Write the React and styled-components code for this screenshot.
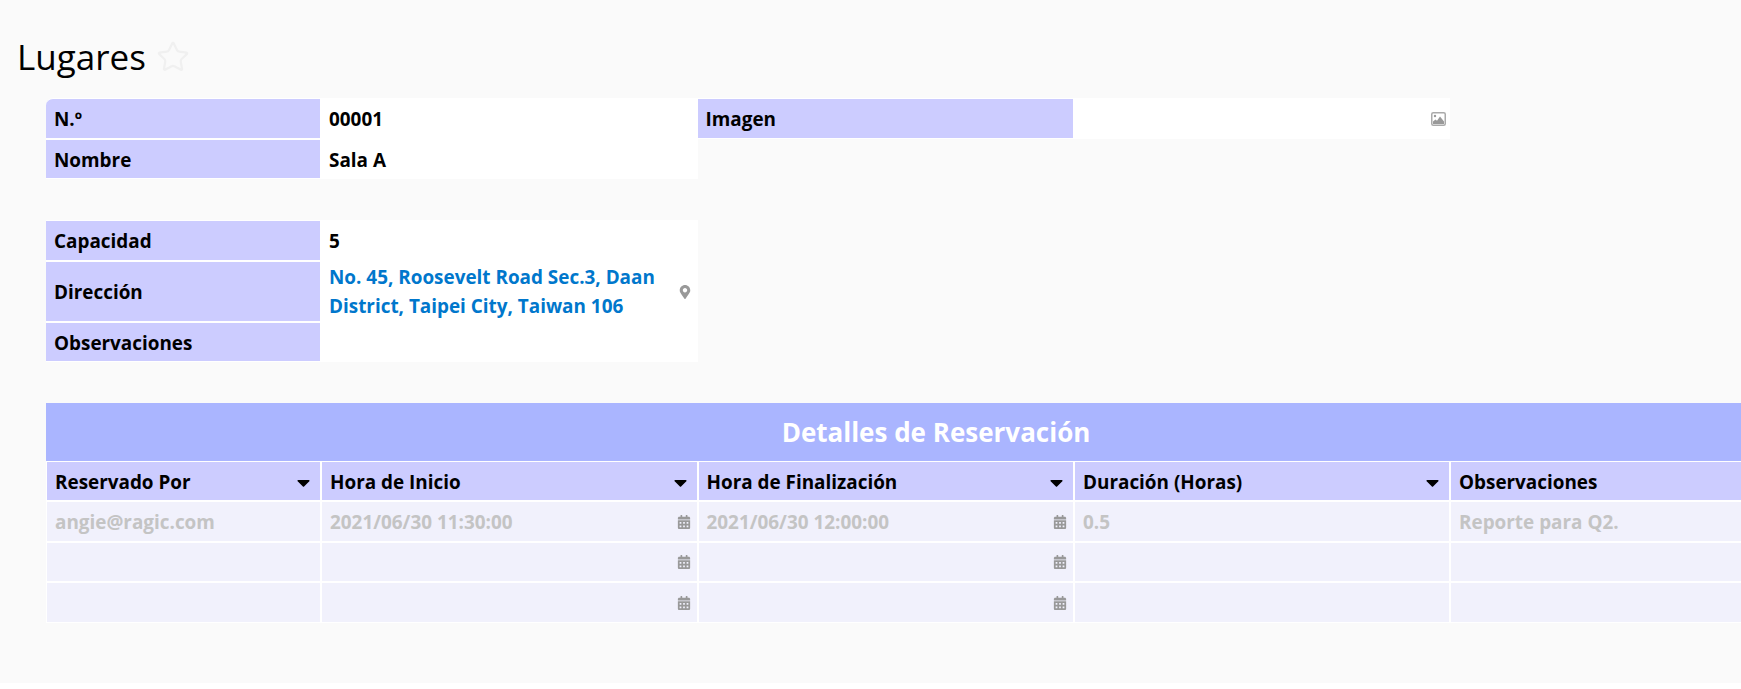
import React from 'react'
import styled, { createGlobalStyle } from 'styled-components'
import { FaCalendarAlt, FaCaretDown, FaMapMarkerAlt } from 'react-icons/fa'
import { Star } from 'lucide-react'

const GlobalStyle = createGlobalStyle`
  html, body {
    margin: 0;
    background: #fff;
    overflow: hidden;
  }
  body {
    font-family: "Open Sans", "Liberation Sans", sans-serif;
  }
`

const Page = styled.div`
  height: 683px;
  background: #fafafa;
  overflow: hidden;
`

const TitleBar = styled.div`
  display: flex;
  align-items: center;
  gap: 10px;
  height: 46px;
  padding: 34px 0 0 17px;
`

const Title = styled.h1`
  margin: -1px 0 0;
  font-size: 35px;
  font-weight: 400;
  line-height: 46px;
  color: #000;
`

const FavStar = styled(Star)`
  width: 34px;
  height: 34px;
  color: #f0f0f0;
  stroke-width: 1.6;
`

const Form = styled.div`
  padding: 18px 0 0 46px;
`

const FieldRow = styled.div`
  display: flex;
  align-items: flex-start;
  margin-bottom: 41px;
`

const FieldGrid = styled.div`
  display: grid;
  grid-template-columns: ${p => p.$labelWidth}px ${p => p.$valueWidth}px;
`

const Label = styled.div`
  display: flex;
  align-items: center;
  box-sizing: border-box;
  height: ${p => p.$height || 40.5}px;
  padding: 2px 0 0 8px;
  background: #ccccff;
  border: solid #fff;
  border-width: 1px 1px 1px 0;
  border-top-left-radius: ${p => (p.$rounded ? 7 : 0)}px;
  font-size: 18.9px;
  font-weight: 700;
  color: #000;
`

const Value = styled.div`
  display: flex;
  align-items: center;
  justify-content: space-between;
  box-sizing: border-box;
  height: ${p => p.$height || 40.5}px;
  padding: 1.5px ${p => p.$right || 6}px 0 8px;
  background: #fff;
  font-size: 18.9px;
  font-weight: 700;
  color: #000;
`

const Address = styled.span`
  width: 330px;
  line-height: 29px;
  color: #0077cc;
`

const GrayIcon = styled.span`
  display: inline-flex;
  flex: none;
  margin-left: auto;
  font-size: ${p => p.$size || 14}px;
  color: #999;
`

const Sheet = styled.div`
  width: 1780px;
`

const Band = styled.div`
  display: flex;
  align-items: center;
  justify-content: center;
  height: 58px;
  background: #aab5ff;
  font-size: 26px;
  font-weight: 700;
  color: #fff;
`

const Columns = styled.div`
  display: grid;
  grid-template-columns: 275px 376.5px 376.5px 376px 376px;
`

const HeadCell = styled.div`
  display: flex;
  align-items: center;
  justify-content: space-between;
  box-sizing: border-box;
  height: 40px;
  padding: 2px 6px 0 8px;
  background: #ccccff;
  border: 1px solid #fff;
  font-size: 18.9px;
  font-weight: 700;
  color: #000;
`

const Caret = styled(FaCaretDown)`
  font-size: 21px;
  color: #000;
`

const DataCell = styled.div`
  display: flex;
  align-items: center;
  box-sizing: border-box;
  height: 40.5px;
  padding: 1px 6px 0 8px;
  background: #f1f1fc;
  border: 1px solid #fff;
  font-size: 18.9px;
  font-weight: 700;
  color: #c4c4c4;
`

const ImageIcon = () => (
  <svg width="15" height="14" viewBox="0 0 15 14">
    <rect x="0.75" y="0.75" width="13.5" height="12.5" rx="1.5" fill="#fff" stroke="#aaa" strokeWidth="1.5" />
    <circle cx="4" cy="4" r="1.2" fill="#999" />
    <path d="M2 12 L2 9.5 L4.5 7.5 L6 8.7 L9 4.5 L13 9.5 L13 12 Z" fill="#999" />
  </svg>
)

const headers = [
  { name: 'Reservado Por', caret: true },
  { name: 'Hora de Inicio', caret: true },
  { name: 'Hora de Finalización', caret: true },
  { name: 'Duración (Horas)', caret: true },
  { name: 'Observaciones', caret: false },
]

const rows = [
  ['angie@ragic.com', '2021/06/30 11:30:00', '2021/06/30 12:00:00', '0.5', 'Reporte para Q2.'],
  ['', '', '', '', ''],
  ['', '', '', '', ''],
]

const App = () => {
  return (
    <Page>
      <GlobalStyle />
      <TitleBar>
        <Title>Lugares</Title>
        <FavStar />
      </TitleBar>

      <Form>
        <FieldRow>
          <FieldGrid $labelWidth={275} $valueWidth={376.5}>
            <Label $rounded>N.º</Label>
            <Value>00001</Value>
            <Label>Nombre</Label>
            <Value>Sala A</Value>
          </FieldGrid>
          <FieldGrid $labelWidth={376.5} $valueWidth={376}>
            <Label>Imagen</Label>
            <Value $right={4}>
              <GrayIcon><ImageIcon /></GrayIcon>
            </Value>
          </FieldGrid>
        </FieldRow>

        <FieldRow>
          <FieldGrid $labelWidth={275} $valueWidth={376.5}>
            <Label>Capacidad</Label>
            <Value>5</Value>
            <Label $height={61}>Dirección</Label>
            <Value $height={61}>
              <Address>No. 45, Roosevelt Road Sec.3, Daan District, Taipei City, Taiwan 106</Address>
              <GrayIcon><FaMapMarkerAlt /></GrayIcon>
            </Value>
            <Label>Observaciones</Label>
            <Value />
          </FieldGrid>
        </FieldRow>

        <Sheet>
          <Band>Detalles de Reservación</Band>
          <Columns>
            {headers.map((h, i) => (
              <HeadCell key={i}>
                {h.name}
                {h.caret && <Caret />}
              </HeadCell>
            ))}
            {rows.map((row, r) =>
              row.map((text, c) => (
                <DataCell key={r + '-' + c}>
                  {text}
                  {(c === 1 || c === 2) && <GrayIcon><FaCalendarAlt /></GrayIcon>}
                </DataCell>
              ))
            )}
          </Columns>
        </Sheet>
      </Form>
    </Page>
  )
}

export default App
